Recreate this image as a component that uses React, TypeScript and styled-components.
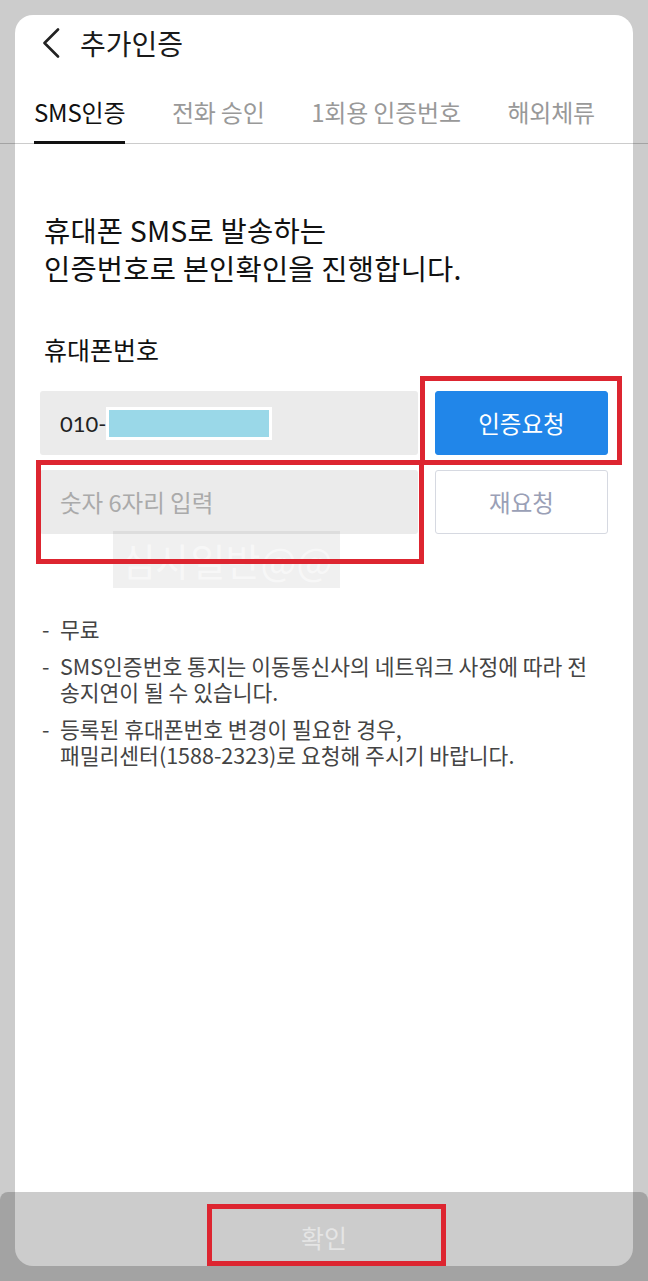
import React from "react";
import styled, { createGlobalStyle } from "styled-components";

const GlobalStyle = createGlobalStyle`
  html, body {
    margin: 0;
    padding: 0;
    background: #cccccc;
  }
  body {
    font-family: "Noto Sans CJK KR", "Noto Sans", sans-serif;
    -webkit-font-smoothing: antialiased;
  }
  * { box-sizing: border-box; }
`;

const Screen = styled.div`
  position: relative;
  width: 648px;
  height: 1281px;
  overflow: hidden;
  background: #cccccc;
  padding-top: 15px;
`;

const Card = styled.div`
  margin: 0 15px;
  height: 1251px;
  background: #ffffff;
  border-radius: 18px;
  display: flex;
  flex-direction: column;
`;

const Header = styled.div`
  height: 56px;
  display: flex;
  align-items: center;
  gap: 20px;
  padding-left: 27px;
`;

const Title = styled.h1`
  margin: 0;
  font-size: 28px;
  font-weight: 400;
  color: #1a1a1a;
  line-height: 1;
`;

const TabBar = styled.div`
  position: relative;
  height: 73px;
  display: flex;
  justify-content: space-between;
  padding: 0 38px 0 19px;
  &::after {
    content: "";
    position: absolute;
    left: -15px;
    right: -15px;
    bottom: 0;
    height: 1px;
    background: rgba(0, 0, 0, 0.2);
  }
`;

const Tab = styled.div<{ $active?: boolean }>`
  position: relative;
  z-index: 1;
  display: flex;
  align-items: center;
  padding-top: 10px;
  font-size: 24px;
  letter-spacing: -0.2px;
  color: ${(p) => (p.$active ? "#111111" : "#999999")};
  border-bottom: 3px solid ${(p) => (p.$active ? "#111111" : "transparent")};
`;

const Content = styled.div`
  padding: 0 25px;
  display: flex;
  flex-direction: column;
`;

const Heading = styled.p`
  margin: 67px 0 0 4px;
  font-size: 28.5px;
  line-height: 38px;
  color: #111111;
  letter-spacing: 0.2px;
`;

const Label = styled.div`
  margin: 47px 0 0 4px;
  font-size: 25px;
  line-height: 30px;
  color: #111111;
`;

const Form = styled.div`
  margin-top: 27px;
  display: grid;
  grid-template-columns: 378px 173px;
  grid-auto-rows: 64px;
  column-gap: 17px;
  row-gap: 15px;
`;

const Field = styled.div<{ $placeholder?: boolean }>`
  background: #ebebeb;
  border-radius: 3px;
  display: flex;
  align-items: center;
  padding-left: 20px;
  font-family: ${(p) =>
    p.$placeholder ? `"Noto Sans CJK KR", sans-serif` : `Lato, "Noto Sans CJK KR", sans-serif`};
  font-size: ${(p) => (p.$placeholder ? "23.5px" : "22px")};
  color: ${(p) => (p.$placeholder ? "#aaaaaa" : "#222222")};
`;

const Redacted = styled.span`
  display: inline-block;
  width: 166px;
  height: 33px;
  background: #9ad8e8;
  border: 3px solid #ffffff;
`;

const Button = styled.button<{ $primary?: boolean }>`
  border-radius: 3px;
  font-family: "Noto Sans CJK KR", sans-serif;
  font-size: 23.5px;
  cursor: pointer;
  background: ${(p) => (p.$primary ? "#2186e9" : "#ffffff")};
  color: ${(p) => (p.$primary ? "#ffffff" : "#9aa0b6")};
  border: 1px solid ${(p) => (p.$primary ? "#2186e9" : "#d6d9e1")};
`;

const Notes = styled.ul`
  list-style: none;
  margin: 82px 0 0 2px;
  padding: 0;
  display: flex;
  flex-direction: column;
  gap: 11px;
`;

const Note = styled.li`
  display: flex;
  font-size: 21.5px;
  line-height: 26px;
  color: #444444;
  white-space: nowrap;
`;

const Dash = styled.span`
  width: 18px;
  flex: none;
`;

const BottomBar = styled.div`
  position: absolute;
  left: 0;
  right: 0;
  bottom: 0;
  height: 89px;
  background: rgba(0, 0, 0, 0.2);
  border-radius: 8px 8px 0 0;
  display: flex;
  align-items: center;
  justify-content: center;
  font-size: 25px;
  color: rgba(255, 255, 255, 0.5);
`;

const Mark = styled.div<{ $x: number; $y: number; $w: number; $h: number }>`
  position: absolute;
  left: ${(p) => p.$x}px;
  top: ${(p) => p.$y}px;
  width: ${(p) => p.$w}px;
  height: ${(p) => p.$h}px;
  border: 5px solid #dd2530;
`;

const Watermark = styled.div`
  position: absolute;
  left: 113px;
  top: 531px;
  width: 227px;
  height: 57px;
  background: rgba(0, 0, 0, 0.06);
  display: flex;
  align-items: center;
  justify-content: center;
  font-size: 38px;
  line-height: 57px;
  color: rgba(255, 255, 255, 0.5);
  white-space: nowrap;
`;

const BackIcon = () => (
  <svg width="18" height="30" viewBox="0 0 18 30" fill="none">
    <path d="M16 1.5 L2.5 15 L16 28.5" stroke="#222" strokeWidth="2.6" strokeLinecap="round" strokeLinejoin="round" />
  </svg>
);

export default function App() {
  return (
    <>
      <GlobalStyle />
      <Screen>
        <Card>
          <Header>
            <BackIcon />
            <Title>추가인증</Title>
          </Header>
          <TabBar>
            <Tab $active>SMS인증</Tab>
            <Tab>전화 승인</Tab>
            <Tab>1회용 인증번호</Tab>
            <Tab>해외체류</Tab>
          </TabBar>
          <Content>
            <Heading>
              휴대폰 SMS로 발송하는
              <br />
              인증번호로 본인확인을 진행합니다.
            </Heading>
            <Label>휴대폰번호</Label>
            <Form>
              <Field>
                010-<Redacted />
              </Field>
              <Button $primary>인증요청</Button>
              <Field $placeholder>숫자 6자리 입력</Field>
              <Button>재요청</Button>
            </Form>
            <Notes>
              <Note>
                <Dash>-</Dash>
                <span>무료</span>
              </Note>
              <Note>
                <Dash>-</Dash>
                <span>
                  SMS인증번호 통지는 이동통신사의 네트워크 사정에 따라 전
                  <br />
                  송지연이 될 수 있습니다.
                </span>
              </Note>
              <Note>
                <Dash>-</Dash>
                <span>
                  등록된 휴대폰번호 변경이 필요한 경우,
                  <br />
                  패밀리센터(1588-2323)로 요청해 주시기 바랍니다.
                </span>
              </Note>
            </Notes>
          </Content>
        </Card>
        <Watermark>심사일반@@</Watermark>
        <Mark $x={420} $y={376} $w={202} $h={89} />
        <Mark $x={36} $y={460} $w={388} $h={104} />
        <BottomBar>확인</BottomBar>
        <Mark $x={207} $y={1204} $w={239} $h={62} />
      </Screen>
    </>
  );
}
